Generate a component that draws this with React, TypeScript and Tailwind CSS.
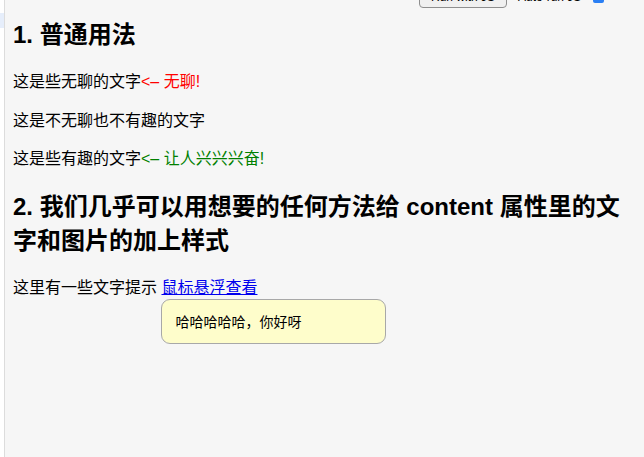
export default function App() {
  return (
    <div
      className="flex h-[457px] w-[644px] overflow-hidden bg-white text-black"
      style={{ fontFamily: '"Liberation Sans", "Noto Sans CJK SC", sans-serif' }}
    >
      {/* editor gutter strip */}
      <div className="flex w-[4px] flex-col pt-[13px]">
        <div className="h-[15px] w-[4px] bg-[#e6eefb]" />
      </div>

      <div className="flex min-w-0 flex-1 flex-col border-l border-[#dcdcdc] bg-[#f6f6f6] pl-[8px]">
        {/* toolbar, scrolled mostly out of view */}
        <div className="-mt-[15px] flex h-[23px] items-center">
          <button className="ml-[406px] h-[22px] w-[88px] rounded-[4px] border border-[#8e8e8e] bg-[#f0f0f0] text-[12px] leading-[20px] text-black">
            Run with JS
          </button>
          <span className="ml-[11px] text-[12px] leading-[20px] text-black">Auto-run JS</span>
          <span className="ml-[12px] mt-[2px] h-[11px] w-[11px] rounded-[2px] bg-[#2a7ff4]" />
          <span className="ml-[22px] mt-[4px] h-[3px] w-[1px] bg-[#999]" />
        </div>

        <h2 className="mt-[10px] text-[24px] font-bold leading-[34px]">1. 普通用法</h2>

        <p className="mt-[19px] text-[16px] leading-[22px]">
          这是些无聊的文字<span className="text-[#ff0000]">&lt;– 无聊!</span>
        </p>
        <p className="mt-[17px] text-[16px] leading-[22px]">这是不无聊也不有趣的文字</p>
        <p className="mt-[16px] text-[16px] leading-[22px]">
          这是些有趣的文字<span className="text-[#008000]">&lt;– 让人兴兴兴奋!</span>
        </p>

        <h2 className="mt-[20px] pr-[10px] text-[24px] font-bold leading-[34px]">
          2. 我们几乎可以用想要的任何方法给 content 属性里的文字和图片的加上样式
        </h2>

        <p className="mt-[19px] text-[16px] leading-[22px]">
          这里有一些文字提示{" "}
          <span className="relative inline-block">
            <a href="#" className="text-[#0000ee] underline">
              鼠标悬浮查看
            </a>
            <span className="absolute left-0 top-[22px] flex h-[45px] w-[225px] items-center rounded-[9px] border border-[#a8a8a8] bg-[#fefdcb] pl-[13px] text-[14px] text-black">
              哈哈哈哈哈，你好呀
            </span>
          </span>
        </p>
      </div>
    </div>
  );
}
